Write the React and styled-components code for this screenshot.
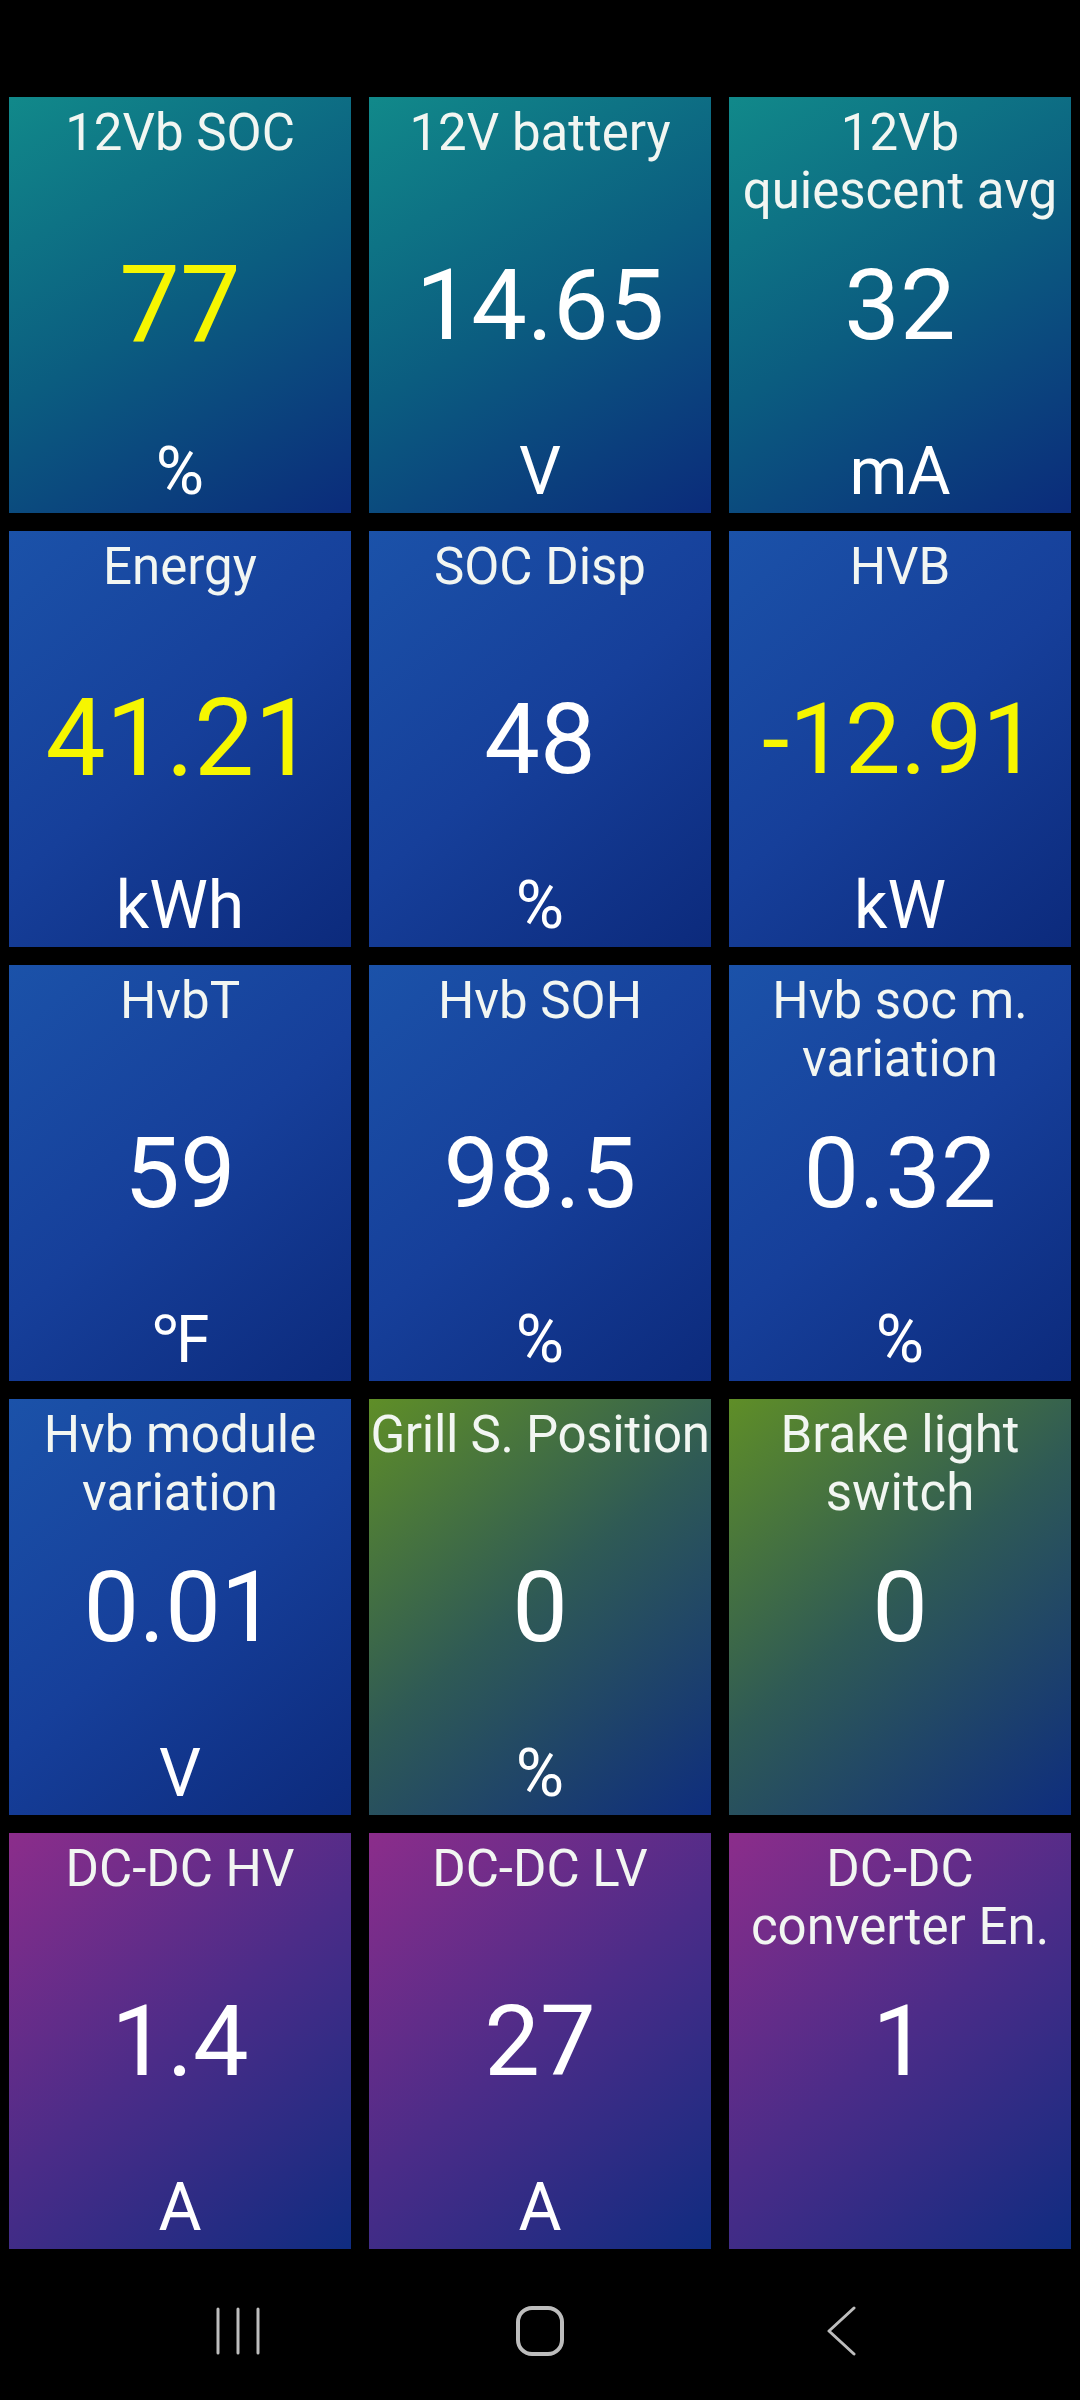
import React from 'react'
import styled, { createGlobalStyle } from 'styled-components'

const GlobalStyle = createGlobalStyle`
    html, body {
        margin: 0;
        padding: 0;
        background: #000;
    }
    body {
        font-family: Roboto, "Noto Sans", sans-serif;
        color: #f4f6f4;
    }
`

const themes = {
    teal: 'linear-gradient(150deg, #11898a 0%, #0b5d80 50%, #0b2b7b 100%)',
    blue: 'linear-gradient(140deg, #1b52a9 0%, #163f9a 50%, #0c2a7c 100%)',
    green: 'linear-gradient(140deg, #5f8e27 0%, #2f5a55 48%, #0e2d7e 100%)',
    purple: 'linear-gradient(140deg, #8c2d8b 0%, #4b2c88 50%, #0f2c80 100%)',
}

const tiles = [
    { title: '12Vb SOC', value: '77', unit: '%', theme: 'teal', warn: true, size: 108 },
    { title: '12V battery', value: '14.65', unit: 'V', theme: 'teal' },
    { title: '12Vb quiescent avg', value: '32', unit: 'mA', theme: 'teal' },
    { title: 'Energy', value: '41.21', unit: 'kWh', theme: 'blue', warn: true, size: 107 },
    { title: 'SOC Disp', value: '48', unit: '%', theme: 'blue' },
    { title: 'HVB', value: '-12.91', unit: 'kW', theme: 'blue', warn: true },
    { title: 'HvbT', value: '59', unit: '℉', theme: 'blue' },
    { title: 'Hvb SOH', value: '98.5', unit: '%', theme: 'blue' },
    { title: 'Hvb soc m. variation', value: '0.32', unit: '%', theme: 'blue' },
    { title: 'Hvb module variation', value: '0.01', unit: 'V', theme: 'blue' },
    { title: 'Grill S. Position', value: '0', unit: '%', theme: 'green', oneLine: true },
    { title: 'Brake light switch', value: '0', unit: '', theme: 'green' },
    { title: 'DC-DC HV', value: '1.4', unit: 'A', theme: 'purple' },
    { title: 'DC-DC LV', value: '27', unit: 'A', theme: 'purple' },
    { title: 'DC-DC converter En.', value: '1', unit: '', theme: 'purple' },
]

function App() {
  return (
    <Screen>
        <GlobalStyle />
        <StatusBar />
        <Grid>
            {tiles.map((t, i) => (
                <Tile key={i} theme={t.theme}>
                    <Title oneLine={t.oneLine}>{t.title}</Title>
                    <Value warn={t.warn} size={t.size || 99}>{t.value}</Value>
                    <Unit>{t.unit}</Unit>
                </Tile>
            ))}
        </Grid>
        <NavBar>
            <NavSlot>
                <svg width="46" height="50" viewBox="0 0 46 50" fill="none" stroke="#bdbdbd" strokeWidth="3" strokeLinecap="round">
                    <line x1="3" y1="3" x2="3" y2="47" />
                    <line x1="23" y1="3" x2="23" y2="47" />
                    <line x1="43" y1="3" x2="43" y2="47" />
                </svg>
            </NavSlot>
            <NavSlot>
                <svg width="48" height="50" viewBox="0 0 48 50" fill="none" stroke="#bdbdbd" strokeWidth="4">
                    <rect x="2" y="2" width="44" height="46" rx="14" />
                </svg>
            </NavSlot>
            <NavSlot>
                <svg width="32" height="50" viewBox="0 0 32 50" fill="none" stroke="#bdbdbd" strokeWidth="3" strokeLinecap="round" strokeLinejoin="round">
                    <polyline points="28,2 3,25 28,48" />
                </svg>
            </NavSlot>
        </NavBar>
    </Screen>
  )
}

export default App

const Screen = styled.div`
    width: 1080px;
    height: 2400px;
    background: #000;
    display: flex;
    flex-direction: column;
    overflow: hidden;
`

const StatusBar = styled.div`
    height: 88px;
    flex-shrink: 0;
`

const Grid = styled.div`
    display: grid;
    grid-template-columns: repeat(3, 342px);
    grid-auto-rows: 416px;
    gap: 18px;
    padding: 9px 9px 0;
`

const Tile = styled.div`
    background: ${props => themes[props.theme]};
    display: grid;
    grid-template-rows: 1fr auto 1fr;
    text-align: center;
    overflow: hidden;
`

const Title = styled.div`
    align-self: start;
    padding-top: 7px;
    font-size: 51px;
    line-height: 58px;
    color: #f2f6f2;
    white-space: ${props => props.oneLine ? 'nowrap' : 'normal'};
    letter-spacing: ${props => props.oneLine ? '-0.3px' : 'normal'};
`

const Value = styled.div`
    font-size: ${props => props.size}px;
    line-height: 122px;
    color: ${props => props.warn ? '#f6f600' : '#ffffff'};
`

const Unit = styled.div`
    align-self: end;
    padding-bottom: 3px;
    font-size: 66px;
    line-height: 77px;
    color: #ffffff;
`

const NavBar = styled.div`
    flex: 1;
    display: flex;
    justify-content: center;
    align-items: flex-start;
    padding-top: 57px;
`

const NavSlot = styled.div`
    width: 302px;
    display: flex;
    justify-content: center;
`
